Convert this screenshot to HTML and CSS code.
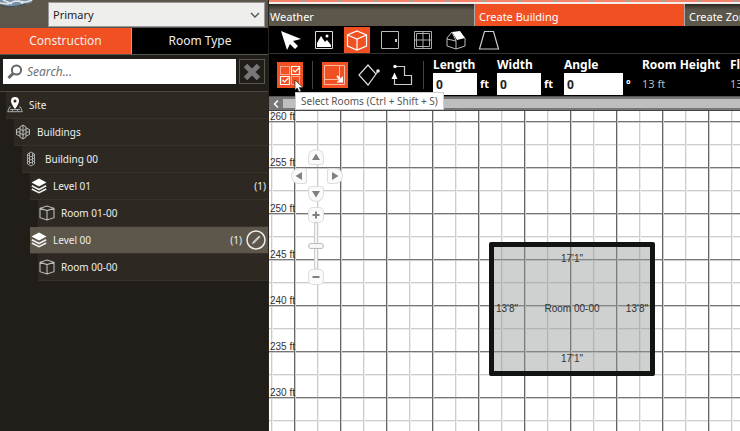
FILE: index.html
```html
<!DOCTYPE html>
<html lang="en">
<head>
<meta charset="utf-8">
<title>Building editor</title>
<link rel="stylesheet" href="styles.css">
</head>
<body>
<svg class="defs" aria-hidden="true">
  <symbol id="layers" viewBox="0 0 16 16"><path d="M8 .5 15.500 4.500 8 8.500.5 4.500z" fill="#fff"/><path d="M.8 7.800 8 11.500l7.200-3.700M.8 11 8 14.700 15.200 11" fill="none" stroke="#eee" stroke-width="1.600"/></symbol>
  <symbol id="room" viewBox="0 0 16 16"><path d="M8 1 15 3.300v9.400L8 15 1 12.700V3.300zM1 3.300l7 2.300 7-2.300M8 5.600V15" fill="none" stroke="#bbb" stroke-width="1.100"/></symbol>
</svg>
<div class="app">
  <aside class="sidebar">
    <header class="model">
      <svg class="photo" viewBox="0 0 48 26" aria-hidden="true"><path d="M0 0h33l-2 3-8 1-7 3-9-1-7-2z" fill="#7890a5"/><path d="M0 3l8 1 7-3 11 1 6-2M3 0l9 4M18 0l5 4" stroke="#dce6ec" stroke-width="1.500" fill="none"/><path d="M1 6l8 1 8-1 9-2" stroke="#3e4c5c" fill="none"/></svg>
      <select class="model-select" aria-label="Model"><option>Primary</option></select>
      <svg class="chevron" viewBox="0 0 10 6" aria-hidden="true"><path d="M1 1l4 4 4-4" fill="none" stroke="#555" stroke-width="1.400"/></svg>
    </header>
    <nav class="side-tabs">
      <button class="side-tab active">Construction</button>
      <button class="side-tab">Room Type</button>
    </nav>
    <div class="search">
      <label class="search-box">
        <svg viewBox="0 0 16 16" aria-hidden="true"><circle cx="9.500" cy="6" r="4.600" fill="none" stroke="#666" stroke-width="2"/><path d="M6 9.500 1.500 14" stroke="#666" stroke-width="3"/></svg>
        <input type="text" placeholder="Search..." aria-label="Search">
      </label>
      <button class="clear" aria-label="Clear search"><svg viewBox="0 0 18 18"><path d="M2.500 2.500l13 13M15.500 2.500l-13 13" stroke="#777" stroke-width="5"/></svg></button>
    </div>
    <ul class="tree">
      <li class="row d0"><svg viewBox="0 0 16 16"><path d="M4 10H2.500L.7 14.700h14.600L13.500 10H12M3 12.500h10M6 12l-1 2.500M10 12l1 2.500" fill="none" stroke="#aaa"/><path fill="#fff" fill-rule="evenodd" d="M8 0a4 4 0 0 1 4 4c0 3-4 8-4 8S4 7 4 4a4 4 0 0 1 4-4zm0 2.600a1.500 1.500 0 1 0 0 3 1.500 1.500 0 0 0 0-3z"/></svg><span>Site</span></li>
      <li class="row d1"><svg viewBox="0 0 16 16"><path d="M5 3 8 1l3 2v10l-3 2-3-2zM5 4 1.500 5.500v5L5 12M11 4l3.500 1.500v5L11 12M1.500 8H5M11 8h3.500M5 5l3 2 3-2M5 9l3 2 3-2M8 1v14" fill="none" stroke="#bbb"/></svg><span>Buildings</span></li>
      <li class="row d2"><svg viewBox="0 0 16 16"><path d="M4.500 3 8 1l3.500 2v10L8 15l-3.500-2zM5 4l3 2 3-2M5 7l3 2 3-2M5 10l3 2 3-2M6.500 2v11M9.500 2v11" fill="none" stroke="#aaa"/></svg><span>Building 00</span></li>
      <li class="row d3"><svg><use href="#layers"/></svg><span>Level 01</span><span class="count">(1)</span></li>
      <li class="row d4"><svg><use href="#room"/></svg><span>Room 01-00</span></li>
      <li class="row d3 selected"><svg><use href="#layers"/></svg><span>Level 00</span><span class="count">(1)</span><button class="edit" aria-label="Edit level"><svg viewBox="0 0 20 20"><circle cx="10" cy="10" r="9" fill="none" stroke="#eee" stroke-width="1.500"/><path d="M6 14l.6-2L13 5.500l1.500 1.500L8 13.400z" fill="#ccc"/></svg></button></li>
      <li class="row d4"><svg><use href="#room"/></svg><span>Room 00-00</span></li>
    </ul>
  </aside>

  <main class="workspace">
    <div class="ribbon"></div>
    <nav class="tabs">
      <button class="tab">Weather</button>
      <button class="tab active">Create Building</button>
      <button class="tab">Create Zones</button>
    </nav>
    <div class="tools">
      <button class="tool" aria-label="Select"><svg viewBox="0 0 26 26"><path d="M3 4l20 8-8 2 5 5-3 3-5-5-3 6z" fill="#fff"/></svg></button>
      <button class="tool" aria-label="Image"><svg viewBox="0 0 26 26"><path d="M4.500 4.500h17v17h-17z" fill="none" stroke="#ddd"/><path d="M6 20v-4l4-7 4 6 2-2 4 5v2z" fill="#fff"/><circle cx="16" cy="9" r="1.500" fill="#fff"/></svg></button>
      <button class="tool on" aria-label="Room"><svg viewBox="0 0 26 26"><path d="M13 4l9.500 4v11L13 23l-9.500-4V8zM3.500 8l9.500 4 9.500-4M13 12v11" fill="none" stroke="#fff" stroke-width="1.200"/></svg></button>
      <button class="tool" aria-label="Door"><svg viewBox="0 0 26 26"><path d="M4.500 4.500h17v17h-17z" fill="none" stroke="#bbb"/><path d="M18 12h2v3h-2z" fill="#ccc"/></svg></button>
      <button class="tool" aria-label="Window"><svg viewBox="0 0 26 26"><path d="M4.500 4.500h17v17h-17zM6.500 6.500h13v13h-13zM13 5v16M5 13h16" fill="none" stroke="#aaa"/></svg></button>
      <button class="tool" aria-label="Roof"><svg viewBox="0 0 26 26"><path d="M9 5l8-1 5 7-8 2z" fill="#fff"/><path d="M9 5l-5 6v8l9 3 9-3v-8M4 12l9 2v8M9 5l4 9" fill="none" stroke="#bbb"/></svg></button>
      <button class="tool" aria-label="Shape"><svg viewBox="0 0 26 26"><path d="M8.500 4.500h9l5 17.500h-19z" fill="none" stroke="#ccc" stroke-width="1.200"/></svg></button>
    </div>
    <div class="options">
      <div class="modes">
        <button class="mode on" aria-label="Select Rooms"><svg viewBox="0 0 26 26"><path d="M3.500 4.500h9v8h-9zM14.500 14.500h8v8h-8z" fill="none" stroke="#fff" stroke-dasharray="1 1"/><path d="M14.500 4.500h8v8h-8zM3.500 14.500h9v8h-9zM16 8l2 2 4-4M5.500 18l2 2 4-4" fill="none" stroke="#fff" stroke-width="1.200"/></svg></button>
        <i class="rule"></i>
        <button class="mode on" aria-label="Rectangle"><svg viewBox="0 0 26 26"><path d="M2.500 3.500h20v19h-20zM3 17.500h14.500V4" fill="none" stroke="#ffb9a5"/><path d="M15 14l3 3" stroke="#fff" stroke-width="2"/><path d="M21 14v6.500h-6.500z" fill="#fff"/></svg></button>
        <button class="mode plain" aria-label="Rotated rectangle"><svg viewBox="0 0 24 24"><path d="M11 2l8 9-8 11-9-10zM19 11l2-3" fill="none" stroke="#ddd" stroke-width="1.200"/><circle cx="21" cy="8" r="1.800" fill="#eee"/></svg></button>
        <button class="mode plain" aria-label="Polygon"><svg viewBox="0 0 24 24"><path d="M5.500 3.500h9v9h7v9h-17V14" fill="none" stroke="#ccc" stroke-width="1.200"/><path d="M4.500 9.500l3 6.500h-6z" fill="#fff"/><circle cx="5" cy="3.500" r="1.800" fill="#eee"/></svg></button>
        <i class="rule"></i>
      </div>
      <label class="field">Length<span class="entry"><input type="text" value="0">ft</span></label>
      <label class="field">Width<span class="entry"><input type="text" value="0">ft</span></label>
      <label class="field angle">Angle<span class="entry"><input type="text" value="0">°</span></label>
      <div class="field height">Room Height<span class="value">13 ft</span></div>
      <div class="field">Floor Height<span class="value">13 ft</span></div>
      <div class="tooltip" role="tooltip">Select Rooms (Ctrl + Shift + S)</div>
      <svg class="pointer" viewBox="0 0 10 14" aria-hidden="true"><path d="M1 1v10l2.300-2 1.700 4 2-1-1.700-3.500H9z" fill="#fff" stroke="#222" stroke-width=".7"/></svg>
    </div>
    <div class="scroll">
      <svg viewBox="0 0 14 14" aria-hidden="true"><path d="M9 3.500 5.500 7 9 10.500" fill="none" stroke="#fff" stroke-width="1.500"/></svg>
      <div class="thumb"></div>
    </div>
    <section class="canvas">
      <ol class="ruler"><li>260 ft</li><li>255 ft</li><li>250 ft</li><li>245 ft</li><li>240 ft</li><li>235 ft</li><li>230 ft</li></ol>
      <div class="plan">
        <span class="north">17'1"</span><span class="west">13'8"</span><span class="name">Room 00-00</span><span class="east">13'8"</span><span class="south">17'1"</span>
      </div>
      <div class="navigator">
        <button class="up" aria-label="Pan up"><svg viewBox="0 0 14 14"><path d="M7 3.500l4 6.500H3z"/></svg></button>
        <button class="left" aria-label="Pan left"><svg viewBox="0 0 14 14"><path d="M3.500 7 10 3v8z"/></svg></button>
        <button class="right" aria-label="Pan right"><svg viewBox="0 0 14 14"><path d="M10.500 7 4 3v8z"/></svg></button>
        <button class="down" aria-label="Pan down"><svg viewBox="0 0 14 14"><path d="M7 10.500 3 4h8z"/></svg></button>
        <button class="plus" aria-label="Zoom in"><svg viewBox="0 0 14 14"><path d="M6 3.500h2V6h2.500v2H8v2.500H6V8H3.500V6H6z"/></svg></button>
        <input class="zoom" type="range" aria-label="Zoom" value="50">
        <button class="minus" aria-label="Zoom out"><svg viewBox="0 0 14 14"><path d="M3.500 6h7v2h-7z"/></svg></button>
      </div>
    </section>
  </main>
</div>
</body>
</html>
```
FILE: styles.css
```css
* { box-sizing: border-box; }
body { margin: 0; font: 12px/16px "Noto Sans", "Open Sans", sans-serif; background: #1f1b16; }
button, input, select { font: inherit; color: inherit; margin: 0; padding: 0; border: 0; border-radius: 0; background: none; }
svg { display: block; }
.defs { position: absolute; width: 0; height: 0; }
.app { display: grid; grid-template-columns: 269px minmax(0, 1fr); min-height: 100vh; overflow: hidden; }

.sidebar { background: #211d18; color: #eee; border-right: 1px solid #29241e; }
.model { display: flex; height: 27px; padding: 2px 3px 0 0; background: #5c574a; position: relative; }
.photo { width: 48px; height: 26px; margin-top: -2px; }
.model-select { flex: 1; height: 25px; padding-left: 4px; appearance: none; background: #eeeeec; border: 1px solid #999; color: #222; font-size: 11px; }
.chevron { position: absolute; right: 8px; top: 12px; width: 10px; height: 6px; }
.side-tabs { display: grid; grid-template-columns: 132px 1fr; height: 28px; border: solid #575752; border-width: 1px 0; }
.side-tab { background: #000; font-size: 12px; }
.side-tab.active { background: #f15022; border-right: 1px solid #aaa; }
.search { display: flex; gap: 3px; height: 37px; padding: 4px 3px 7px; border-bottom: 1px solid #4a463f; }
.search-box { flex: 1; display: flex; align-items: center; gap: 4px; padding-left: 4px; background: #fff; color: #666; }
.search-box svg { width: 16px; height: 16px; }
.search-box input { flex: 1; min-width: 0; font-style: italic; outline: 0; }
.search-box input::placeholder { color: #707070; opacity: 1; }
.clear { width: 26px; display: grid; place-items: center; border: 1px solid #5b5750; }
.clear svg { width: 18px; height: 18px; }
.tree { margin: 0; padding: 0; list-style: none; font-size: 10px; }
.row { display: flex; align-items: center; gap: 6px; height: 27px; padding: 0 2px 0 1px; background: #2d2922; border-bottom: 1px solid #37332c; }
.row > svg { width: 16px; height: 16px; }
.d0 { margin-left: 6px; } .d1 { margin-left: 14px; } .d2 { margin-left: 22px; } .d3 { margin-left: 30px; } .d4 { margin-left: 38px; }
.count { margin-left: auto; }
.selected { background: #5c574a; }
.edit { width: 20px; height: 20px; margin-left: -2px; }

.workspace { display: flex; flex-direction: column; min-width: 0; color: #fff; }
.ribbon { height: 4px; background: repeating-linear-gradient(90deg, #f58268 0 32px, #a9a09b 32px 36px); border: solid; border-width: 0 0 2px; border-color: #f4eeea; }
.tabs { display: flex; height: 22px; background: linear-gradient(#2b2823, #5c574a 6px); }
.tab { flex: 0 0 210px; padding: 3px 4px 0; text-align: left; font-size: 11px; overflow: hidden; white-space: nowrap; border-right: 1px solid #aaa; }
.tab:first-child { flex-basis: 206px; padding-left: 1px; }
.tab.active { background: #f15022; }
.tools { display: flex; gap: 7px; height: 28px; padding: 1px 9px; background: #000; border-bottom: 1px solid #333; }
.tool, .mode { flex: none; width: 26px; height: 26px; }
.plain { width: 24px; height: 24px; }
.on { background: #f15022; }
.options { display: flex; height: 42px; background: #000; position: relative; white-space: nowrap; font-weight: 700; overflow: visible; font-size: 11px; }
.modes { display: flex; gap: 9px; align-items: center; padding: 0 0 0 8px; width: 164px; flex: none; }
.rule { width: 1px; height: 28px; background: #444; }
.field { flex: none; width: 64px; padding-top: 3px; display: flex; flex-direction: column; line-height: 16px; font-size: 12px; }
.angle { width: 78px; margin-left: 3px; }
.height { width: 88px; }
.entry { display: flex; gap: 3px; align-items: center; height: 22px; font-size: 11px; }
.entry input { width: 44px; height: 22px; padding-left: 3px; background: #fff; color: #222; font-size: 12px; }
.angle input { width: 59px; }
.value { font-size: 11px; font-weight: 400; color: #bbb; line-height: 22px; }
.tooltip { position: absolute; left: 26px; top: 38px; z-index: 2; height: 18px; padding: 0 5px; font-size: 10px; font-weight: 400; line-height: 16px; background: #fff; color: #555; border: 1px solid #ccc; }
.pointer { position: absolute; left: 25px; top: 25px; z-index: 3; width: 10px; height: 14px; }
.scroll { display: flex; align-items: center; height: 15px; background: #777; border-top: 1px solid #555; border-bottom: 1px solid #444; }
.scroll svg { width: 14px; height: 14px; }
.thumb { flex: 1; height: 9px; background: #bebebe; }

.canvas { flex: 1; position: relative; overflow: hidden; color: #333; font: 10px/12px "Liberation Sans", sans-serif;
  background-color: #fff;
  background-image: linear-gradient(90deg, #666 1px, #ccc 1px 2px, transparent 2px), linear-gradient(#777 1px, #ccc 1px 2px, transparent 2px), linear-gradient(90deg, #ccc 1px, #eee 1px 2px, transparent 2px), linear-gradient(#ccc 1px, #eee 1px 2px, transparent 2px);
  background-size: 46px 46px; background-position: 25px 0, 0 10px, 2px 0, 0 33px; }
.ruler { margin: 0; padding: 0 0 0 1px; list-style: none; }
.ruler li { height: 46px; }
.plan { position: absolute; left: 220px; top: 131px; width: 166px; height: 134px; display: grid; grid-template: 24px 1fr 24px / auto 1fr auto; place-items: center; padding: 0 2px; border: 5px solid #121411; border-radius: 2px; background: rgba(150, 155, 152, .46); }
.north, .south { grid-column: 1 / 4; }

.navigator { position: absolute; left: 23px; top: 38px; width: 50px; height: 136px; }
.navigator button { position: absolute; left: 17px; width: 14px; height: 14px; border-radius: 4px; background: #fafafa; box-shadow: 0 0 0 1px #ddd; }
.navigator path { fill: #808080; }
.navigator .up { top: 1px; border-radius: 7px 7px 2px 2px; }
.navigator .left { left: 0; top: 20px; border-radius: 7px 2px 2px 7px; }
.navigator .right { left: 36px; top: 20px; border-radius: 2px 7px 7px 2px; }
.navigator .down { top: 38px; border-radius: 2px 2px 7px 7px; }
.navigator .plus { top: 59px; }
.navigator .minus { top: 121px; }
.zoom { position: absolute; left: 16px; top: 73px; width: 16px; height: 48px; appearance: none; writing-mode: vertical-lr; }
.zoom::-webkit-slider-runnable-track { width: 4px; background: #f4f4f4; border: 1px solid #ccc; border-radius: 2px; }
.zoom::-webkit-slider-thumb { appearance: none; width: 16px; height: 6px; margin-left: -7px; background: #f6f6f6; border: 1px solid #bbb; border-radius: 3px; }
```
